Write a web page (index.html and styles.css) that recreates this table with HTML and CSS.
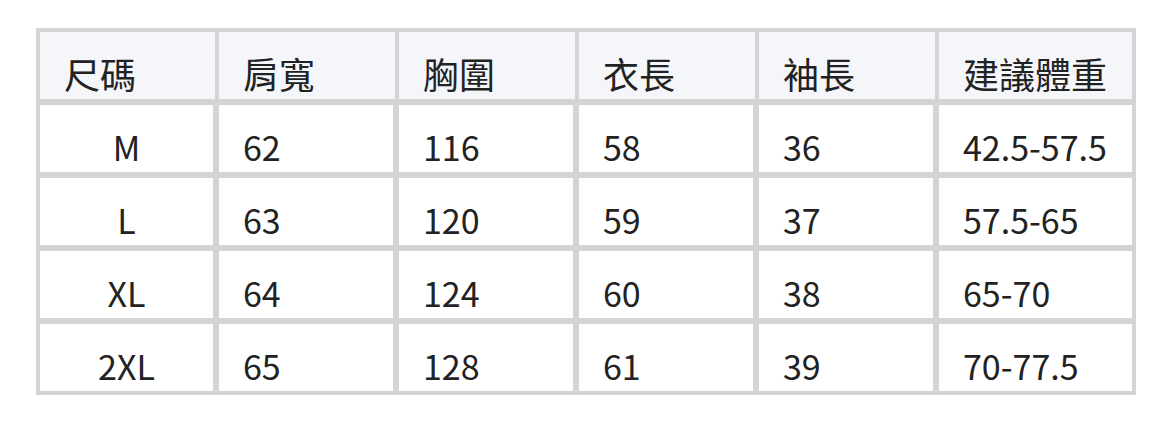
FILE: index.html
```html
<!DOCTYPE html>
<html lang="zh-Hant">
<head>
<meta charset="utf-8">
<link rel="stylesheet" href="styles.css">
</head>
<body>
<div class="page">
  <div class="size-table">
    <div class="cell head">尺碼</div>
    <div class="cell head">肩寬</div>
    <div class="cell head">胸圍</div>
    <div class="cell head">衣長</div>
    <div class="cell head">袖長</div>
    <div class="cell head last">建議體重</div>

    <div class="cell size">M</div>
    <div class="cell">62</div>
    <div class="cell">116</div>
    <div class="cell">58</div>
    <div class="cell">36</div>
    <div class="cell">42.5-57.5</div>

    <div class="cell size">L</div>
    <div class="cell">63</div>
    <div class="cell">120</div>
    <div class="cell">59</div>
    <div class="cell">37</div>
    <div class="cell">57.5-65</div>

    <div class="cell size">XL</div>
    <div class="cell">64</div>
    <div class="cell">124</div>
    <div class="cell">60</div>
    <div class="cell">38</div>
    <div class="cell">65-70</div>

    <div class="cell size">2XL</div>
    <div class="cell">65</div>
    <div class="cell">128</div>
    <div class="cell">61</div>
    <div class="cell">39</div>
    <div class="cell">70-77.5</div>
  </div>
</div>
</body>
</html>
```

FILE: styles.css
```css
html, body {
  margin: 0;
  padding: 0;
  background: #ffffff;
}

.page {
  padding: 28px 0 0 36px;
}

.size-table {
  display: inline-grid;
  grid-template-columns: 173px 174px 174px 174px 174px 193px;
  grid-auto-rows: 67px;
  column-gap: 6px;
  row-gap: 6px;
  padding: 4px;
  background: #d4d4d4;
  font-family: "Noto Sans CJK TC", "Noto Sans", sans-serif;
  font-size: 34px;
  line-height: 34px;
  color: #222222;
}

.cell {
  background: #ffffff;
  padding: 25px 0 0 24px;
  box-sizing: border-box;
  white-space: nowrap;
}

.cell.head {
  background: #f5f6fa;
  margin-right: -2px;
  font-size: 36px;
  line-height: 36px;
  padding-top: 23px;
}

.cell.head.last {
  margin-right: 0;
}

.cell.size {
  padding-left: 0;
  text-align: center;
}
```
